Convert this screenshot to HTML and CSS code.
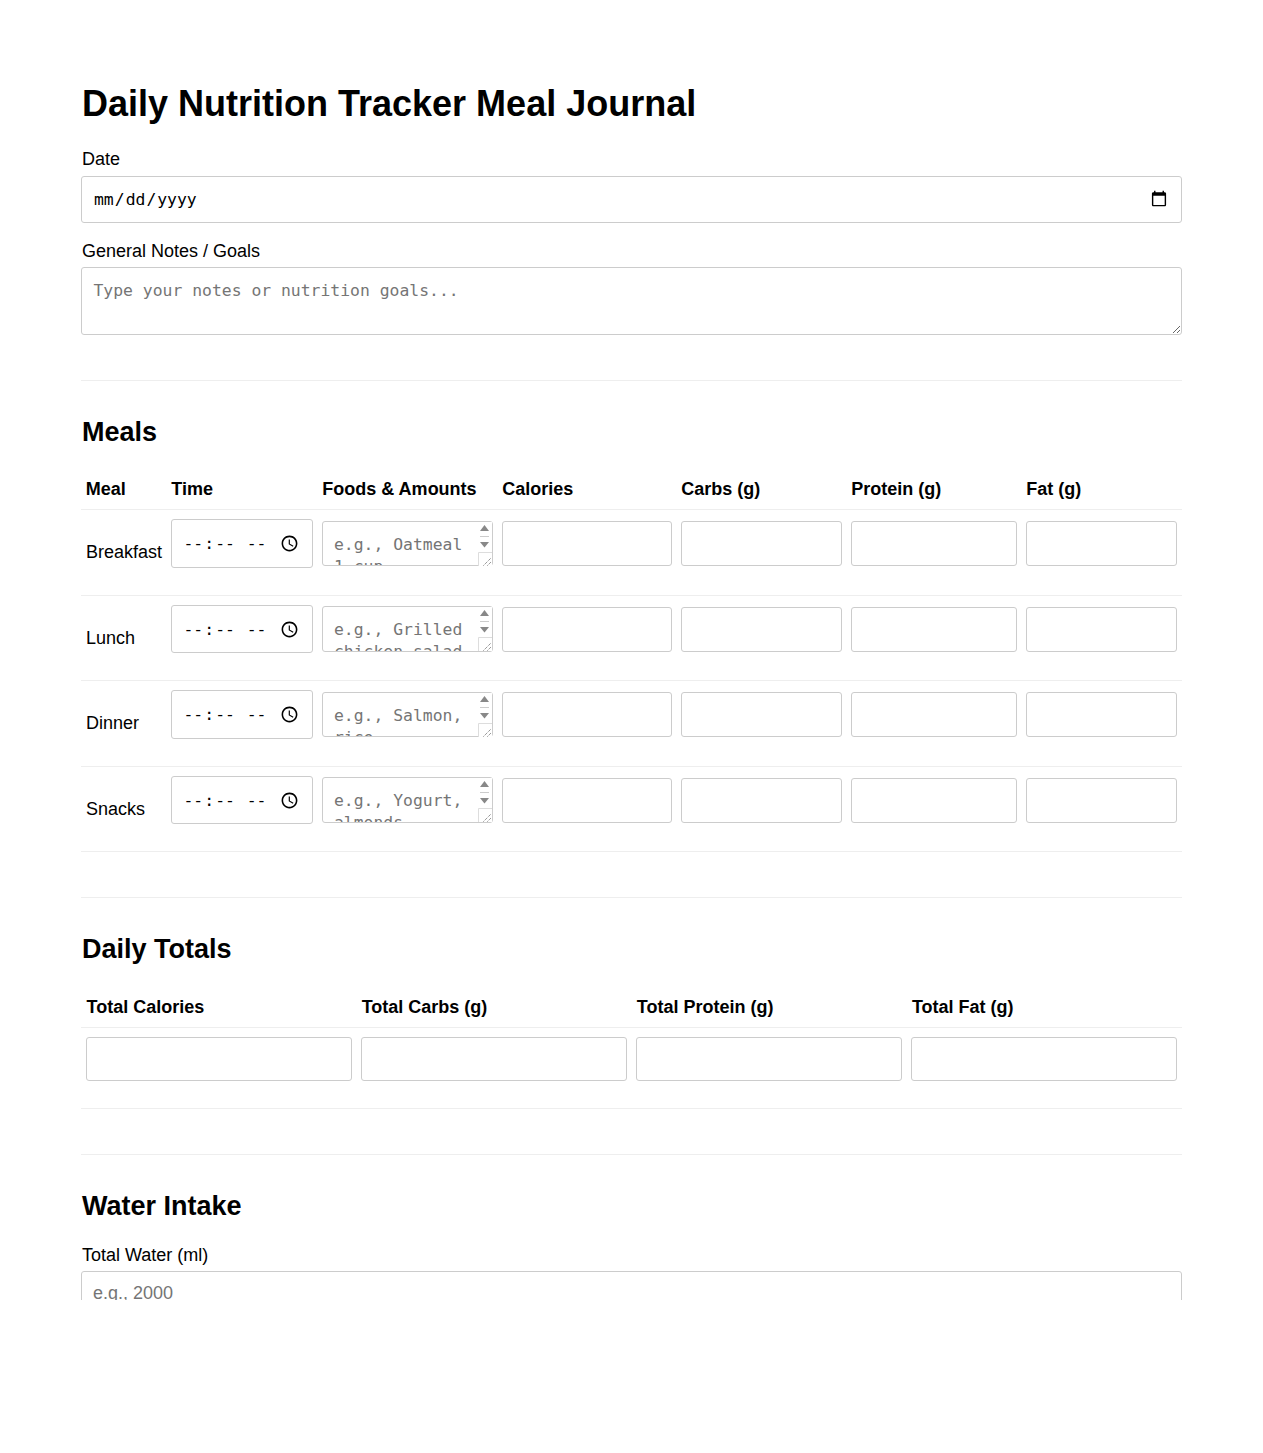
FILE: index.html
```html
<!DOCTYPE html>
<html lang="en">
<head>
<meta charset="UTF-8">
<meta name="viewport" content="width=device-width, initial-scale=1.0">
<title>Daily Nutrition Tracker Meal Journal</title>
<link rel="stylesheet" href="styles.css">
</head>
<body>
<svg width="0" height="0" class="defs">
    <symbol id="scrollbar" viewBox="0 0 14 44">
        <rect width="14" height="44" fill="#fff"/>
        <path d="M6.5 3L11 9H2z" fill="#888"/>
        <path d="M2 14.5h9" stroke="#ccc"/>
        <path d="M2 20h9l-4.5 5.5z" fill="#888"/>
        <path d="M.5 44V30.5H14" fill="none" stroke="#ddd"/>
        <path d="M5.5 43.5l7.5-7.5M9.5 43.5l3.5-3.5" fill="none" stroke="#666" stroke-dasharray="1 1"/>
    </symbol>
</svg>
<div class="container">
    <h1>Daily Nutrition Tracker Meal Journal</h1>

    <label for="date">Date</label>
    <input type="date" id="date" class="mono date">

    <label for="notes">General Notes / Goals</label>
    <textarea id="notes" class="mono notes" placeholder="Type your notes or nutrition goals..."></textarea>

    <hr>

    <h2>Meals</h2>
    <table class="meals">
        <colgroup>
            <col class="col-meal"><col class="col-time"><col class="col-foods"><col class="col-cal">
            <col class="col-carbs"><col class="col-protein"><col class="col-fat">
        </colgroup>
        <thead>
            <tr>
                <th>Meal</th>
                <th>Time</th>
                <th>Foods &amp; Amounts</th>
                <th>Calories</th>
                <th>Carbs (g)</th>
                <th>Protein (g)</th>
                <th>Fat (g)</th>
            </tr>
        </thead>
        <tbody>
            <tr>
                <td>Breakfast</td>
                <td><input type="time" class="mono time"></td>
                <td>
                    <div class="foods-wrap">
                        <textarea class="mono foods" placeholder="e.g., Oatmeal 1 cup, berries"></textarea>
                        <svg class="scrollbar"><use href="#scrollbar"/></svg>
                    </div>
                </td>
                <td><input type="number"></td>
                <td><input type="number"></td>
                <td><input type="number"></td>
                <td><input type="number"></td>
            </tr>
            <tr>
                <td>Lunch</td>
                <td><input type="time" class="mono time"></td>
                <td>
                    <div class="foods-wrap">
                        <textarea class="mono foods" placeholder="e.g., Grilled chicken salad"></textarea>
                        <svg class="scrollbar"><use href="#scrollbar"/></svg>
                    </div>
                </td>
                <td><input type="number"></td>
                <td><input type="number"></td>
                <td><input type="number"></td>
                <td><input type="number"></td>
            </tr>
            <tr>
                <td>Dinner</td>
                <td><input type="time" class="mono time"></td>
                <td>
                    <div class="foods-wrap">
                        <textarea class="mono foods" placeholder="e.g., Salmon, rice, broccoli"></textarea>
                        <svg class="scrollbar"><use href="#scrollbar"/></svg>
                    </div>
                </td>
                <td><input type="number"></td>
                <td><input type="number"></td>
                <td><input type="number"></td>
                <td><input type="number"></td>
            </tr>
            <tr>
                <td>Snacks</td>
                <td><input type="time" class="mono time"></td>
                <td>
                    <div class="foods-wrap">
                        <textarea class="mono foods" placeholder="e.g., Yogurt, almonds, fruit"></textarea>
                        <svg class="scrollbar"><use href="#scrollbar"/></svg>
                    </div>
                </td>
                <td><input type="number"></td>
                <td><input type="number"></td>
                <td><input type="number"></td>
                <td><input type="number"></td>
            </tr>
        </tbody>
    </table>

    <hr>

    <h2>Daily Totals</h2>
    <table class="totals">
        <thead>
            <tr>
                <th>Total Calories</th>
                <th>Total Carbs (g)</th>
                <th>Total Protein (g)</th>
                <th>Total Fat (g)</th>
            </tr>
        </thead>
        <tbody>
            <tr>
                <td><input type="number"></td>
                <td><input type="number"></td>
                <td><input type="number"></td>
                <td><input type="number"></td>
            </tr>
        </tbody>
    </table>

    <hr>

    <h2>Water Intake</h2>
    <label for="water">Total Water (ml)</label>
    <input type="number" id="water" placeholder="e.g., 2000">
</div>
</body>
</html>
```
FILE: styles.css
```css
body {
    font-family: "Liberation Sans", Arial, sans-serif;
    font-size: 18px;
    color: #000;
    background-color: #fff;
    margin: 0;
}

.defs {
    position: absolute;
}

.container {
    height: 1300px;
    margin: 0 81px;
    padding-top: 82px;
    box-sizing: border-box;
    overflow: hidden;
}

h1 {
    font-size: 36px;
    line-height: 44px;
    margin: 0 0 23px 1px;
}

h2 {
    font-size: 27px;
    line-height: 32px;
    margin: 0 0 23px 1px;
}

label {
    display: block;
    margin: 0 0 5px 1px;
}

h1 + label {
    margin-bottom: 6px;
}

input, textarea {
    display: block;
    width: 100%;
    box-sizing: border-box;
    padding: 11px;
    margin: 0 0 18px;
    font-family: "Liberation Sans", Arial, sans-serif;
    font-size: 18px;
    border: 1px solid #ccc;
    border-radius: 3px;
    background-color: #fff;
}

.mono {
    font-family: "DejaVu Sans Mono", monospace;
    font-size: 16.4px;
}

textarea.mono {
    padding: 12px 11.5px;
    line-height: 22px;
}

.mono::-webkit-calendar-picker-indicator {
    font-size: 18px;
    margin-right: -1px;
    transform: translate(-1px, -1px);
}

.date {
    height: 47px;
}

.time {
    height: 48.5px;
    padding-left: 10.5px;
}

.time::-webkit-calendar-picker-indicator {
    transform: none;
}

.notes {
    height: 68px;
}

.foods-wrap {
    position: relative;
}

textarea.foods {
    height: 45.6px;
    padding-left: 11px;
    padding-right: 26px;
    overflow: hidden;
    resize: none;
}

/* headless chromium hides real scrollbars, so this sits over the textarea */
.scrollbar {
    position: absolute;
    top: 1px;
    right: 1px;
    width: 14px;
    height: 44px;
}

hr {
    border: none;
    border-top: 1px solid #eee;
    margin: 45px 0 35px;
}

table {
    width: 100%;
    table-layout: fixed;
    border-collapse: collapse;
}

th, td {
    padding: 9px 5px 9px 4.5px;
    text-align: left;
    border-bottom: 1px solid #eee;
}

th {
    padding-top: 8.3px;
    padding-left: 4.8px;
    font-weight: bold;
}

td:first-child {
    padding-left: 5px;
}

.totals {
    width: 1100.5px;
}

.totals th {
    padding-top: 8.9px;
    padding-left: 5.5px;
}

.totals td {
    padding-left: 4.5px;
    padding-right: 4.5px;
}

.totals input {
    height: 44px;
}

.col-meal { width: 85.5px; }
.col-time { width: 151px; }
.col-foods { width: 180px; }
.col-cal { width: 179px; }
.col-carbs { width: 170px; }
.col-protein { width: 175px; }
.col-fat { width: 160.5px; }
```
